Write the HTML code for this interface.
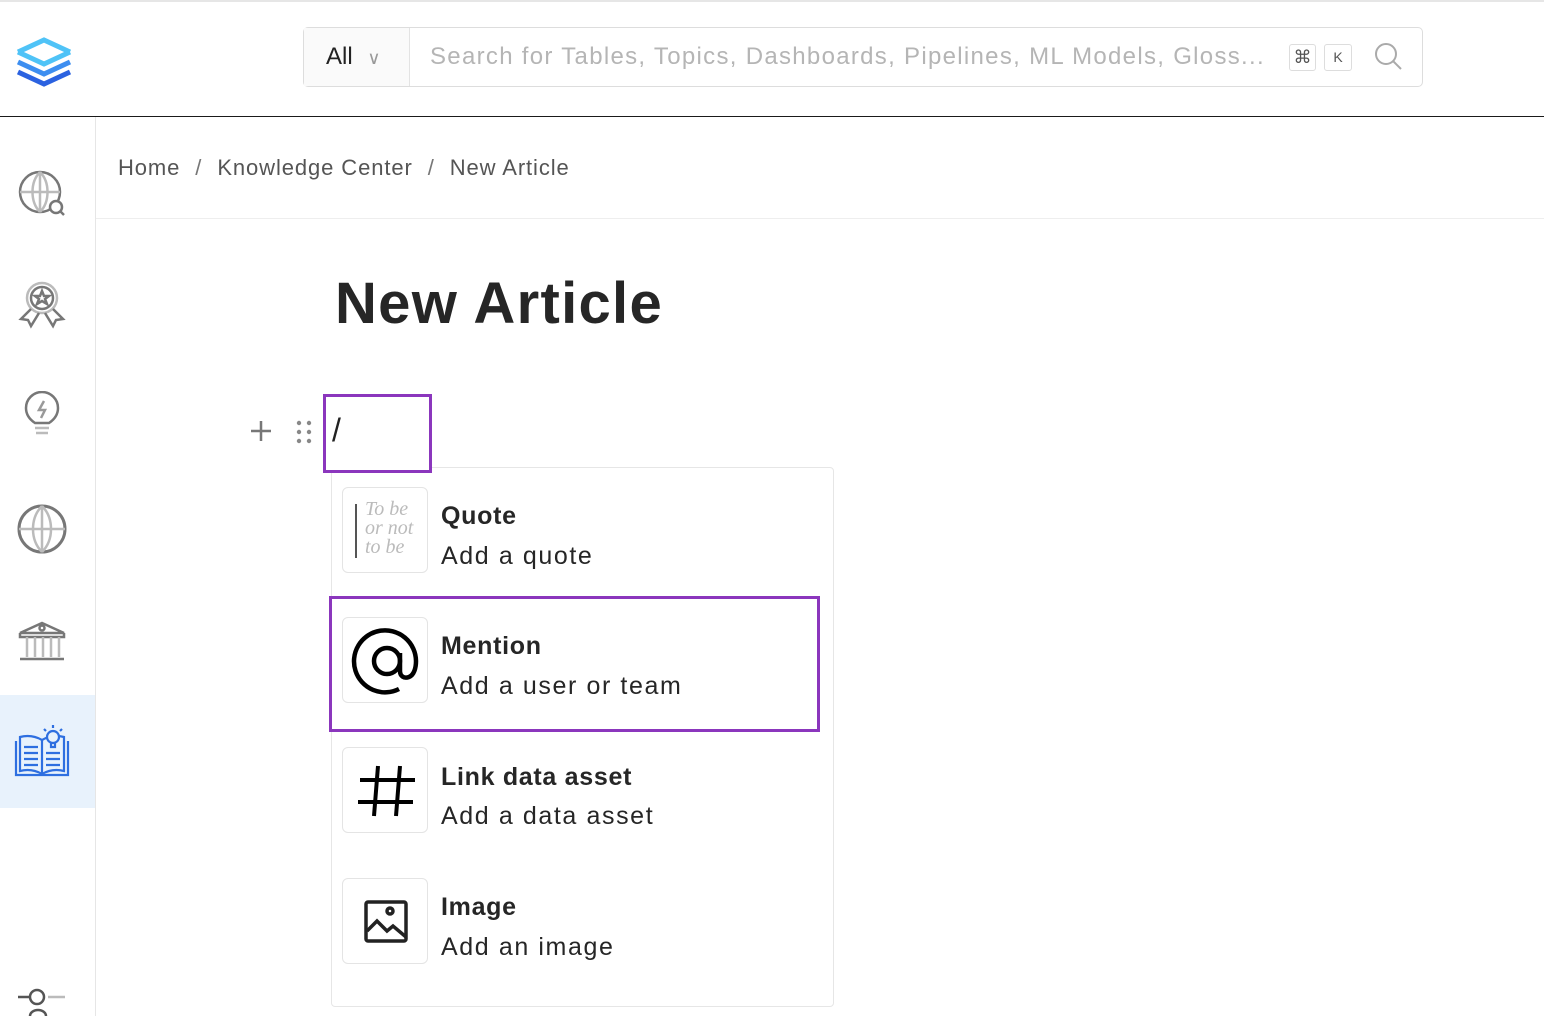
<!DOCTYPE html>
<html><head><meta charset="utf-8"><style>
*{box-sizing:border-box;margin:0;padding:0}
body{width:1544px;height:1016px;overflow:hidden;background:#fff;font-family:"Liberation Sans",sans-serif;color:#222;position:relative}
.hdr{position:absolute;left:0;top:0;width:1544px;height:117px;border-top:2px solid #e6e6e6;border-bottom:1px solid #1a1a1a;background:#fff}
.search{position:absolute;left:303px;top:25px;width:1120px;height:60px;border:1px solid #ddd;border-radius:5px}
.all{position:absolute;left:0;top:0;width:106px;height:58px;border-right:1px solid #e3e3e3;background:#fafafa;font-size:24px;line-height:58px;padding-left:22px;color:#222}
.ph{position:absolute;left:126px;top:0;line-height:58px;font-size:24px;color:#b5b5b5;letter-spacing:1.3px;white-space:nowrap}
.kbd{position:absolute;top:16px;height:27px;border:1px solid #ddd;border-radius:3px;font-size:14px;line-height:25px;text-align:center;color:#555}
.side{position:absolute;left:0;top:117px;width:96px;height:899px;border-right:1px solid #e6e6e6;background:#fff}
.crumb{position:absolute;left:96px;top:117px;width:1448px;height:102px;border-bottom:1px solid #eee;font-size:22px;color:#555;padding:38px 0 0 22px;letter-spacing:.9px;white-space:nowrap}
.crumb span{margin:0 15px;color:#777}
h1{position:absolute;left:335px;top:270px;font-size:58px;font-weight:bold;color:#262626;letter-spacing:1.3px}
.box{position:absolute;border:3px solid #8b36bd}
.menu{position:absolute;left:331px;top:467px;width:503px;height:540px;border:1px solid #e6e6e6;border-radius:4px;background:#fff}
.ic{position:absolute;left:342px;width:86px;height:86px;border:1px solid #e4e4e4;border-radius:6px;background:#fff}
.t{position:absolute;left:441px;font-size:25px;font-weight:bold;color:#262626;letter-spacing:.7px;white-space:nowrap}
.d{position:absolute;left:441px;font-size:25px;color:#262626;letter-spacing:1.6px;white-space:nowrap}
</style></head><body>
<div class="hdr">
<svg style="position:absolute;left:16px;top:30px" width="56" height="56" viewBox="0 0 56 56">
<path d="M2 20 L28 8 L54 20" fill="none" stroke="#4fc3f7" stroke-width="5"/>
<path d="M2 20 L28 32 L54 20" fill="none" stroke="#4fc3f7" stroke-width="5"/>
<path d="M2 30 L28 42 L54 30" fill="none" stroke="#3d8ef0" stroke-width="5"/>
<path d="M2 40 L28 52 L54 40" fill="none" stroke="#2b62e0" stroke-width="5"/>
</svg>
<div class="search">
<div class="all">All <span style="color:#999;font-size:18px;margin-left:8px">&#8744;</span></div>
<div class="ph">Search for Tables, Topics, Dashboards, Pipelines, ML Models, Gloss...</div>
<div class="kbd" style="left:985px;width:27px;font-size:18px">&#8984;</div>
<div class="kbd" style="left:1020px;width:28px">K</div>
<svg style="position:absolute;left:1070px;top:14px" width="30" height="30" viewBox="0 0 30 30"><circle cx="12" cy="12" r="10" fill="none" stroke="#aaa" stroke-width="2"/><path d="M19 19 L27 27" stroke="#aaa" stroke-width="2"/></svg>
</div>
</div>
<div class="side">
<svg style="position:absolute;left:17px;top:52px" width="50" height="50" viewBox="0 0 50 50" fill="none" stroke="#777" stroke-width="2.5"><circle cx="23" cy="23" r="20"/><path d="M3 23h40M23 3v40M23 3c-10 10-10 30 0 40M23 3c10 10 10 30 0 40" stroke="#bbb"/><circle cx="39" cy="38" r="6" fill="#fff"/><path d="M43 42l4 4"/></svg>
<svg style="position:absolute;left:17px;top:162px" width="50" height="50" viewBox="0 0 50 50" fill="none" stroke="#777" stroke-width="2.5"><circle cx="25" cy="19" r="15" stroke="#bbb"/><circle cx="25" cy="19" r="11"/><path d="M25 12l2 5h5l-4 3 2 5-5-3-5 3 2-5-4-3h5z"/><path d="M14 30l-10 10 7 1 3 6 8-13M36 30l10 10-7 1-3 6-8-13"/></svg>
<svg style="position:absolute;left:22px;top:274px" width="42" height="50" viewBox="0 0 42 50" fill="none" stroke="#777" stroke-width="2.5"><path d="M13 32c-6-4-9-9-9-15a16 16 0 0 1 32 0c0 6-3 11-9 15z"/><path d="M22 10l-5 9h6l-4 8" stroke="#999"/><path d="M13 37h14M14 42h12" stroke="#bbb"/></svg>
<svg style="position:absolute;left:15px;top:385px" width="54" height="54" viewBox="0 0 54 54" fill="none" stroke="#777" stroke-width="3"><circle cx="27" cy="27" r="23"/><path d="M4 27h46M27 4v46M27 4c-12 12-12 34 0 46M27 4c12 12 12 34 0 46" stroke="#bbb" stroke-width="2.5"/></svg>
<svg style="position:absolute;left:16px;top:498px" width="52" height="50" viewBox="0 0 52 50" fill="none" stroke="#777" stroke-width="2.5"><path d="M4 18l22-10 22 10zM4 18v4h44v-4"/><circle cx="26" cy="13" r="2.5"/><path d="M11 22v20M19 22v20M27 22v20M35 22v20M43 22v20" stroke="#bbb"/><path d="M4 44h44"/></svg>
<div style="position:absolute;left:0;top:578px;width:95px;height:113px;background:#e8f2fc"></div>
<svg style="position:absolute;left:13px;top:606px" width="58" height="58" viewBox="0 0 58 58" fill="none" stroke="#2e6fe0" stroke-width="2.2"><path d="M3 18v34h52V18"/><path d="M7 14v34c8-2 15-1 22 3 7-4 14-5 22-3V14c-8-2-15-1-22 3-7-4-14-5-22-3z"/><path d="M29 17v34"/><path d="M11 24h14M11 30h14M11 36h14M11 42h14M33 30h14M33 36h14M33 42h14"/><circle cx="40" cy="14" r="6" fill="#e8f2fc"/><path d="M38 20v4h4v-4M40 2v3M31 6l2 2M49 6l-2 2"/></svg>
<svg style="position:absolute;left:18px;top:868px" width="50" height="31" viewBox="0 0 50 31" fill="none" stroke="#555" stroke-width="2.5"><path d="M0 12h12"/><circle cx="19" cy="12" r="7"/><path d="M30 12h17" stroke="#bbb"/><path d="M12 31a8 6 0 0 1 16 0"/></svg>
</div>
<div class="crumb">Home<span>/</span>Knowledge Center<span>/</span>New Article</div>
<h1>New Article</h1>
<svg style="position:absolute;left:250px;top:420px" width="22" height="22" viewBox="0 0 22 22"><path d="M11 1v20M1 11h20" stroke="#777" stroke-width="2.5"/></svg>
<svg style="position:absolute;left:296px;top:420px" width="18" height="24" viewBox="0 0 18 24" fill="#888"><circle cx="3" cy="3" r="2.2"/><circle cx="13" cy="3" r="2.2"/><circle cx="3" cy="12" r="2.2"/><circle cx="13" cy="12" r="2.2"/><circle cx="3" cy="21" r="2.2"/><circle cx="13" cy="21" r="2.2"/></svg>
<div class="menu"></div>
<div class="box" style="left:323px;top:394px;width:109px;height:79px;background:#fff"></div>
<div style="position:absolute;left:332px;top:412px;font-size:32px;color:#222">/</div>
<div class="ic" style="top:487px"><div style="position:absolute;left:12px;top:16px;width:2px;height:54px;background:#555"></div><div style="position:absolute;left:22px;top:12px;font-family:'Liberation Serif',serif;font-style:italic;font-size:20px;line-height:19px;color:#bbb">To be<br>or not<br>to be</div></div>
<div class="t" style="top:502px">Quote</div><div class="d" style="top:542px">Add a quote</div>
<div class="box" style="left:329px;top:596px;width:491px;height:136px"></div>
<div class="ic" style="top:617px"><svg style="position:absolute;left:5px;top:5px" width="76" height="76" viewBox="0 0 76 76" fill="none" stroke="#000" stroke-width="4.5"><circle cx="39" cy="38" r="13"/><path d="M52 30v18c0 5 4 8 9 6 5-2 7-9 7-16a31 31 0 1 0-17 28"/></svg></div>
<div class="t" style="top:632px">Mention</div><div class="d" style="top:672px">Add a user or team</div>
<div class="ic" style="top:747px"><svg style="position:absolute;left:12px;top:12px" width="62" height="62" viewBox="0 0 62 62" stroke="#000" stroke-width="4"><path d="M23 6l-4 50M45 6l-4 50M5 20h55M3 42h55"/></svg></div>
<div class="t" style="top:763px">Link data asset</div><div class="d" style="top:802px">Add a data asset</div>
<div class="ic" style="top:878px"><svg style="position:absolute;left:20px;top:20px" width="46" height="46" viewBox="0 0 46 46" fill="none" stroke="#222" stroke-width="3.5"><rect x="3" y="3" width="40" height="39" rx="2"/><circle cx="27" cy="12" r="3"/><path d="M4 32l10-10 10 10 6-5 13 11"/></svg></div>
<div class="t" style="top:893px">Image</div><div class="d" style="top:933px">Add an image</div>
</body></html>
